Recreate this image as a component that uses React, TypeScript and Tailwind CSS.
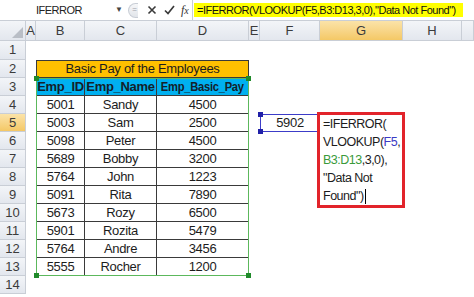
import React from 'react';

const cols = ['A', 'B', 'C', 'D', 'E', 'F', 'G', 'H', ''];

const employees = [
  ['5001', 'Sandy', '4500'],
  ['5003', 'Sam', '2500'],
  ['5098', 'Peter', '4500'],
  ['5689', 'Bobby', '3200'],
  ['5764', 'John', '1223'],
  ['5091', 'Rita', '7890'],
  ['5673', 'Rozy', '6500'],
  ['5901', 'Rozita', '5479'],
  ['5764', 'Andre', '3456'],
  ['5555', 'Rocher', '1200'],
];

const hdr = 'flex items-center justify-center text-[13px] text-[#3b3b3b] border-r border-b border-[#c9ced6]';
const hdrBg = 'bg-gradient-to-b from-[#f3f5f8] to-[#e3e7ee]';
const hdrActive = 'bg-gradient-to-b from-[#fbe3a8] to-[#f4c865]';
const cell =
  'flex items-center justify-center text-[13px] tracking-[-0.3px] text-[#1c1c1c] border-r border-b border-[#3a3a3a] whitespace-nowrap overflow-hidden';

const FormulaBar: React.FC = () => (
  <div className="h-[21px] flex items-center bg-white border-b border-[#c9ced6]">
    <div className="w-[112px] shrink-0 h-full flex items-center pl-[36px] text-[11px] tracking-[-0.5px] text-[#222]">
      IFERROR
    </div>
    <div className="w-[14px] shrink-0 text-[8px] text-[#444] text-center">▼</div>
    <div className="shrink-0 ml-[2px] w-[10px] h-[15px] rounded-l-full border border-r-0 border-[#c9ced6] bg-gradient-to-b from-[#f6f7f9] to-[#e2e5ea] flex items-center justify-end pr-[1px]">
      <span className="text-[8px] leading-none text-[#9aa0a8]">=</span>
    </div>
    <div className="w-[54px] shrink-0 flex items-center justify-around pl-[6px]">
      <svg width="10" height="10" viewBox="0 0 10 10">
        <path d="M1.5 1.5 L8.5 8.5 M8.5 1.5 L1.5 8.5" stroke="#3a3a3a" strokeWidth="1.6" />
      </svg>
      <svg width="11" height="10" viewBox="0 0 11 10">
        <path d="M1 5.5 L4 8.5 L10 1" stroke="#3a3a3a" strokeWidth="1.7" fill="none" />
      </svg>
      <span className="text-[12px] italic font-['Liberation_Serif',serif] text-[#333]">
        f<span className="text-[10px]">x</span>
      </span>
    </div>
    <div className="flex-1 min-w-0 h-full flex items-center border-l border-[#c9ced6] pl-[1px] pr-[11px]">
      <div className="h-[14px] flex-1 min-w-0 bg-[#ffff00] flex items-center pl-[3px] text-[11px] tracking-[-0.5px] text-[#111] whitespace-nowrap">
        =IFERROR(VLOOKUP(F5,B3:D13,3,0),"Data Not Found")
      </div>
    </div>
  </div>
);

const Handle: React.FC<{ className: string; color: string }> = ({ className, color }) => (
  <div className={`absolute w-[5px] h-[5px] ${color} ${className}`} />
);

const App: React.FC = () => {
  const rows = Array.from({ length: 14 }, (_, i) => i + 1);

  return (
    <div className="w-[474px] h-[297px] overflow-hidden bg-white font-['Liberation_Sans',Arial,sans-serif]">
      <FormulaBar />
      <div className="relative grid grid-cols-[26px_10px_49px_72px_92px_11px_60px_83px_59px_12px] grid-rows-[20px_19px_repeat(14,18px)]">
        {/* column headers */}
        <div className={`${hdr} ${hdrBg} relative`}>
          <div className="absolute right-[2px] bottom-[2px] w-0 h-0 border-l-[11px] border-l-transparent border-b-[11px] border-b-[#b9bec6]" />
        </div>
        {cols.map((c, i) => (
          <div key={i} className={`${hdr} ${c === 'G' ? hdrActive : hdrBg}`}>
            {c}
          </div>
        ))}

        {rows.map((r) => {
          const rowHeader = (
            <div key={`h${r}`} className={`${hdr} ${r === 5 ? hdrActive : hdrBg}`}>
              {r}
            </div>
          );
          const blank = (k: string) => <div key={k} />;

          if (r === 2) {
            return (
              <React.Fragment key={r}>
                {rowHeader}
                {blank('a')}
                <div className={`${cell} col-span-3 bg-[#ffc000] border-l border-t border-[#2b2b2b]`}>
                  Basic Pay of the Employees
                </div>
                {blank('e')}
                {blank('f')}
                {blank('g')}
                {blank('h')}
                {blank('i')}
              </React.Fragment>
            );
          }

          let data: string[] | null = null;
          let head = false;
          if (r === 3) {
            data = ['Emp_ID', 'Emp_Name', 'Emp_Basic_Pay'];
            head = true;
          } else if (r >= 4 && r <= 13) {
            data = employees[r - 4];
          }

          return (
            <React.Fragment key={r}>
              {rowHeader}
              {blank('a')}
              {data ? (
                data.map((v, j) => (
                  <div
                    key={j}
                    className={`${cell} ${j === 0 ? 'border-l' : ''} ${
                      head ? 'bg-[#00b0f0] font-bold text-[12px] text-[#14202a]' : 'bg-white'
                    }`}
                  >
                    {head && j === 2 ? <span className="inline-block scale-x-[0.86]">{v}</span> : v}
                  </div>
                ))
              ) : (
                <>
                  {blank('b')}
                  {blank('c')}
                  {blank('d')}
                </>
              )}
              {blank('e')}
              {r === 5 ? (
                <div className="relative flex items-center justify-center text-[13px] tracking-[-0.3px] text-[#1c1c1c] border border-[#3c3cc8]">
                  5902
                  <Handle className="-left-[3px] -top-[3px]" color="bg-[#2020a8]" />
                  <Handle className="-left-[3px] -bottom-[3px]" color="bg-[#2020a8]" />
                </div>
              ) : (
                blank('f')
              )}
              {blank('g')}
              {blank('h')}
              {blank('i')}
            </React.Fragment>
          );
        })}

        {/* B3:D13 reference highlight */}
        <div className="absolute left-[36px] top-[57px] w-[213px] h-[198px] border border-[#5cb85c] pointer-events-none">
          <Handle className="-left-[3px] -top-[3px]" color="bg-[#1f8a2a]" />
          <Handle className="-right-[3px] -top-[3px]" color="bg-[#1f8a2a]" />
          <Handle className="-left-[3px] -bottom-[3px]" color="bg-[#1f8a2a]" />
          <Handle className="-right-[3px] -bottom-[3px]" color="bg-[#1f8a2a]" />
        </div>

        {/* in-cell editor on G5 */}
        <div className="absolute left-[317px] top-[91px] w-[88px] h-[96px] border-[3px] border-[#e2232a] bg-white pl-[3px] text-[12.5px] tracking-[-0.5px] leading-[18px] text-[#1c1c1c] whitespace-nowrap">
          <div>=IFERROR(</div>
          <div>
            VLOOKUP(<span className="text-[#3b3bc4]">F5</span>,
          </div>
          <div>
            <span className="text-[#3a9a3a]">B3:D13</span>,3,0),
          </div>
          <div>"Data Not</div>
          <div>
            Found")<span className="inline-block w-[1px] h-[15px] bg-black align-middle ml-[1px]" />
          </div>
        </div>
      </div>
    </div>
  );
};

export default App;
